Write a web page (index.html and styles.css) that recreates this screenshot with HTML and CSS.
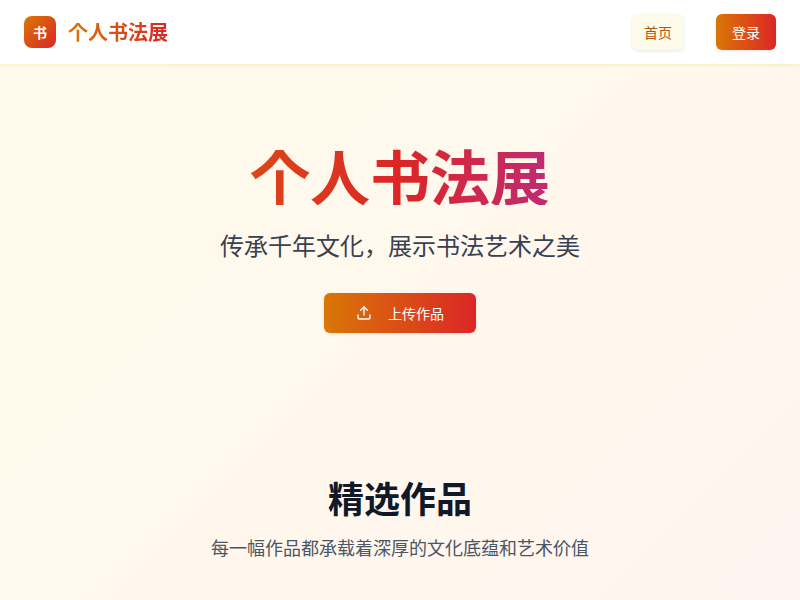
FILE: index.html
```html
<!DOCTYPE html>
<html>
<head>
  <meta charset="UTF-8">
  <meta name="viewport" content="width=device-width, initial-scale=1.0">
  <title>个人书法展</title>
  <link rel="stylesheet" href="styles.css">
</head>
<body>
  <header class="nav">
    <a class="brand" href="#">
      <span class="brand-mark">书</span>
      <span class="brand-name">个人书法展</span>
    </a>
    <nav class="nav-links">
      <a class="nav-home" href="#">首页</a>
      <a class="nav-login" href="#">登录</a>
    </nav>
  </header>

  <main>
    <section class="hero">
      <h1>个人书法展</h1>
      <p class="hero-sub">传承千年文化，展示书法艺术之美</p>
      <a class="upload-btn" href="#">
        <svg class="upload-icon" viewBox="0 0 24 24" fill="none" stroke="currentColor" stroke-width="2" stroke-linecap="round" stroke-linejoin="round">
          <path d="M21 15v4a2 2 0 0 1-2 2H5a2 2 0 0 1-2-2v-4"></path>
          <path d="M17 8l-5-5-5 5"></path>
          <path d="M12 3v12"></path>
        </svg>
        <span>上传作品</span>
      </a>
    </section>

    <section class="featured">
      <h2>精选作品</h2>
      <p>每一幅作品都承载着深厚的文化底蕴和艺术价值</p>
    </section>
  </main>
</body>
</html>
```

FILE: styles.css
```css
* {
  box-sizing: border-box;
}
html, body {
  height: 100%;
}
body {
  margin: 0;
  overflow: hidden;
  font-family: "Noto Sans CJK JP", "Liberation Sans", sans-serif;
  background: linear-gradient(135deg, #fffbeb 0%, #fff7ed 50%, #fef2f2 100%) no-repeat;
  background-size: 100% 1000px;
  color: #111827;
}
a {
  text-decoration: none;
}

.nav {
  display: flex;
  align-items: center;
  justify-content: space-between;
  height: 65px;
  padding: 0 24px;
  background: #fff;
  border-bottom: 1px solid #fef3c7;
  box-shadow: 0 1px 2px rgba(0, 0, 0, 0.05);
}
.brand {
  display: flex;
  align-items: center;
  gap: 12px;
}
.brand-mark {
  display: flex;
  align-items: center;
  justify-content: center;
  width: 32px;
  height: 32px;
  border-radius: 8px;
  background: linear-gradient(135deg, #d97706, #dc2626);
  color: #fff;
  font-size: 14px;
  font-weight: 700;
}
.brand-name {
  font-size: 20px;
  line-height: 28px;
  font-weight: 700;
  background: linear-gradient(90deg, #d97706, #dc2626);
  -webkit-background-clip: text;
  background-clip: text;
  color: transparent;
}
.nav-links {
  display: flex;
  align-items: center;
  gap: 32px;
}
.nav-home, .nav-login {
  display: block;
  height: 36px;
  font-size: 14px;
  line-height: 36px;
  border-radius: 6px;
  box-shadow: 0 1px 3px rgba(0, 0, 0, 0.1);
}
.nav-home {
  padding: 0 12px;
  background: #fffbeb;
  color: #b45309;
}
.nav-login {
  padding: 0 16px;
  background: linear-gradient(90deg, #d97706, #dc2626);
  color: #fff;
}

.hero {
  padding: 80px 24px 0;
  text-align: center;
}
.hero h1 {
  margin: 0 0 24px;
  font-size: 60px;
  line-height: 60px;
  font-weight: 700;
  background: linear-gradient(90deg, #d97706, #dc2626, #9333ea);
  -webkit-background-clip: text;
  background-clip: text;
  color: transparent;
}
.hero-sub {
  margin: 0 0 32px;
  font-size: 24px;
  line-height: 32px;
  color: #374151;
}
.upload-btn {
  display: inline-flex;
  align-items: center;
  gap: 16px;
  height: 40px;
  padding: 0 32px;
  border-radius: 6px;
  background: linear-gradient(90deg, #d97706, #dc2626);
  color: #fff;
  font-size: 14px;
  box-shadow: 0 1px 3px rgba(0, 0, 0, 0.1);
}
.upload-icon {
  width: 16px;
  height: 16px;
}

.featured {
  padding-top: 144px;
  text-align: center;
}
.featured h2 {
  margin: 0 0 16px;
  font-size: 36px;
  line-height: 40px;
  font-weight: 700;
}
.featured p {
  margin: 0;
  font-size: 18px;
  line-height: 28px;
  color: #4b5563;
}
```
